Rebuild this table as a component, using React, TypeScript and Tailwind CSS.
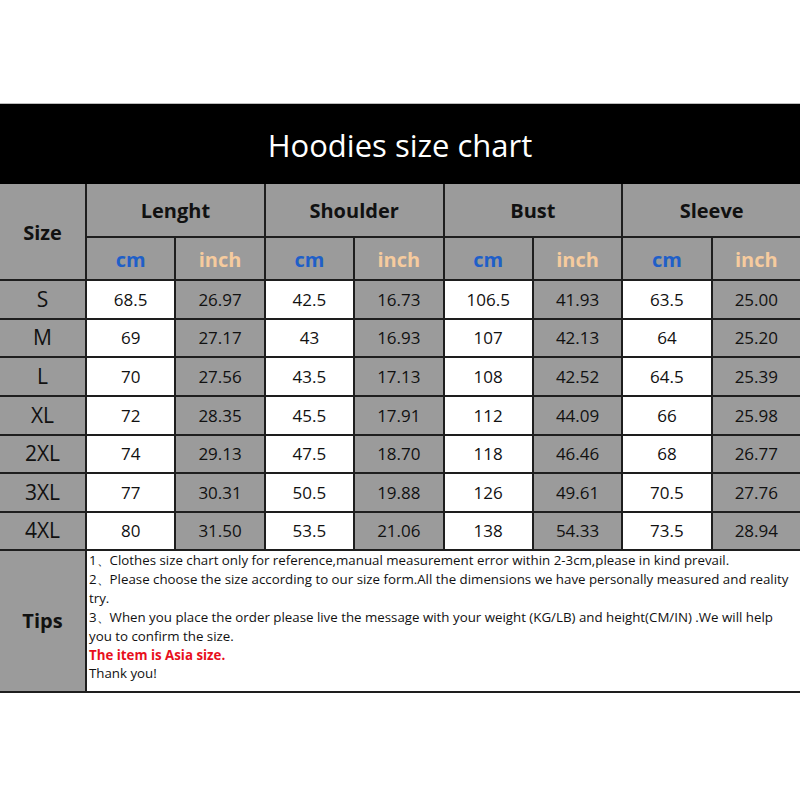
import React from "react";

const rows: [string, string, string, string, string, string, string, string, string][] = [
  ["S", "68.5", "26.97", "42.5", "16.73", "106.5", "41.93", "63.5", "25.00"],
  ["M", "69", "27.17", "43", "16.93", "107", "42.13", "64", "25.20"],
  ["L", "70", "27.56", "43.5", "17.13", "108", "42.52", "64.5", "25.39"],
  ["XL", "72", "28.35", "45.5", "17.91", "112", "44.09", "66", "25.98"],
  ["2XL", "74", "29.13", "47.5", "18.70", "118", "46.46", "68", "26.77"],
  ["3XL", "77", "30.31", "50.5", "19.88", "126", "49.61", "70.5", "27.76"],
  ["4XL", "80", "31.50", "53.5", "21.06", "138", "54.33", "73.5", "28.94"],
];

const font = { fontFamily: '"Open Sans", "Noto Sans", sans-serif' };

export default function App() {
  const groups = ["Lenght", "Shoulder", "Bust", "Sleeve"];
  return (
    <div className="w-[800px] h-[800px] bg-white overflow-hidden" style={font}>
      <div className="h-[104px] border-b border-[#bdbdbd]" />
      <div className="h-[80px] bg-black flex items-center justify-center">
        <span className="text-white text-[31px] font-normal leading-none mt-[2px]">Hoodies size chart</span>
      </div>
      <div
        className="grid gap-[2px] bg-[#1e1e1e] border-b-2 border-[#1e1e1e]"
        style={{
          gridTemplateColumns: "85px repeat(8, 1fr)",
          gridTemplateRows: "52px 41px 37px 36px 37px 37px 36px 37px 36px 140px",
        }}
      >
        <div className="row-span-2 bg-[#9b9b9b] flex items-center justify-center text-[20px] font-bold text-[#111] pt-[2px]">Size</div>
        {groups.map((g) => (
          <div key={g} className="col-span-2 bg-[#9b9b9b] flex items-center justify-center text-[20px] font-bold text-[#111] pt-[2px]">
            {g}
          </div>
        ))}
        {groups.map((g) => (
          <React.Fragment key={g + "u"}>
            <div className="bg-[#9b9b9b] flex items-center justify-center text-[20px] font-bold text-[#1f5fc8] pt-[2px]">cm</div>
            <div className="bg-[#9b9b9b] flex items-center justify-center text-[20px] font-bold text-[#f6cb9e] pt-[2px]">inch</div>
          </React.Fragment>
        ))}
        {rows.map((r) => (
          <React.Fragment key={r[0]}>
            {r.map((v, i) => (
              <div
                key={i}
                className={`flex items-center justify-center text-[#111] ${
                  i === 0 ? "bg-[#9b9b9b] text-[21px]" : i % 2 === 1 ? "bg-white text-[17px]" : "bg-[#9b9b9b] text-[17px]"
                }`}
              >
                {v}
              </div>
            ))}
          </React.Fragment>
        ))}
        <div className="bg-[#9b9b9b] flex items-center justify-center text-[20px] font-bold text-[#111]">Tips</div>
        <div className="col-span-8 bg-white pl-[2px] text-[13.3px] leading-[18.9px] text-[#111] whitespace-nowrap overflow-hidden">
          <div>1、Clothes size chart only for reference,manual measurement error within 2-3cm,please in kind prevail.</div>
          <div>2、Please choose the size according to our size form.All the dimensions we have personally measured and reality</div>
          <div>try.</div>
          <div>3、When you place the order please live the message with your weight (KG/LB) and height(CM/IN) .We will help</div>
          <div>you to confirm the size.</div>
          <div className="text-[#e8101c] font-bold">The item is Asia size.</div>
          <div>Thank you!</div>
        </div>
      </div>
    </div>
  );
}
